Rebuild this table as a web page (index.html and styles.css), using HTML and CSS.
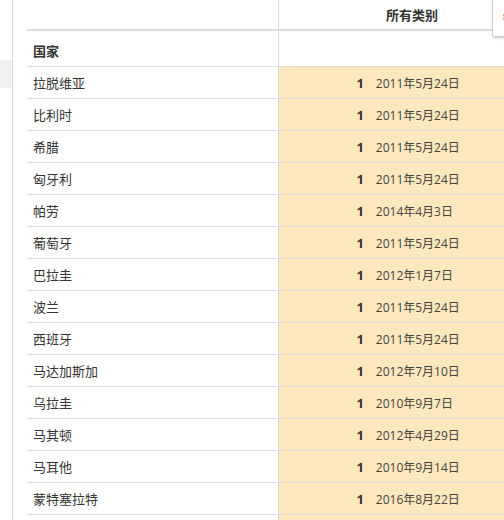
FILE: index.html
```html
<!DOCTYPE html>
<html lang="zh">
<head>
<meta charset="utf-8">
<link rel="stylesheet" href="styles.css">
</head>
<body>
<div class="page">
  <div class="rail"><div class="rail-item"></div></div>
  <div class="content">
    <table class="pivot">
      <thead>
        <tr class="head1"><th class="c1"></th><th class="c2">所有类别</th></tr>
        <tr class="head2"><th class="c1">国家</th><th class="c2"></th></tr>
      </thead>
      <tbody>
        <tr><td class="c1">拉脱维亚</td><td class="c2"><span class="num">1</span><span class="date">2011年5月24日</span></td></tr>
        <tr><td class="c1">比利时</td><td class="c2"><span class="num">1</span><span class="date">2011年5月24日</span></td></tr>
        <tr><td class="c1">希腊</td><td class="c2"><span class="num">1</span><span class="date">2011年5月24日</span></td></tr>
        <tr><td class="c1">匈牙利</td><td class="c2"><span class="num">1</span><span class="date">2011年5月24日</span></td></tr>
        <tr><td class="c1">帕劳</td><td class="c2"><span class="num">1</span><span class="date">2014年4月3日</span></td></tr>
        <tr><td class="c1">葡萄牙</td><td class="c2"><span class="num">1</span><span class="date">2011年5月24日</span></td></tr>
        <tr><td class="c1">巴拉圭</td><td class="c2"><span class="num">1</span><span class="date">2012年1月7日</span></td></tr>
        <tr><td class="c1">波兰</td><td class="c2"><span class="num">1</span><span class="date">2011年5月24日</span></td></tr>
        <tr><td class="c1">西班牙</td><td class="c2"><span class="num">1</span><span class="date">2011年5月24日</span></td></tr>
        <tr><td class="c1">马达加斯加</td><td class="c2"><span class="num">1</span><span class="date">2012年7月10日</span></td></tr>
        <tr><td class="c1">乌拉圭</td><td class="c2"><span class="num">1</span><span class="date">2010年9月7日</span></td></tr>
        <tr><td class="c1">马其顿</td><td class="c2"><span class="num">1</span><span class="date">2012年4月29日</span></td></tr>
        <tr><td class="c1">马耳他</td><td class="c2"><span class="num">1</span><span class="date">2010年9月14日</span></td></tr>
        <tr><td class="c1">蒙特塞拉特</td><td class="c2"><span class="num">1</span><span class="date">2016年8月22日</span></td></tr>
        <tr><td class="c1">&nbsp;</td><td class="c2"></td></tr>
      </tbody>
    </table>
  </div>
  <div class="popover"><span class="dots"></span></div>
</div>
</body>
</html>
```
FILE: styles.css
```css
html, body {
  margin: 0;
  padding: 0;
  background: #fff;
  overflow: hidden;
}
body {
  width: 504px;
  height: 520px;
  font-family: "Open Sans", "Noto Sans CJK SC", sans-serif;
  color: #333;
}
.page {
  position: relative;
  display: flex;
  height: 520px;
  overflow: hidden;
}
.rail {
  width: 12px;
  flex: none;
  border-right: 1px solid #dcdcdc;
  padding-top: 60px;
  box-sizing: content-box;
}
.rail-item {
  height: 28px;
  background: #f0f0f0;
}
.content {
  flex: none;
  padding-left: 14px;
}
.pivot {
  border-collapse: collapse;
  table-layout: fixed;
  width: 518px;
}
.pivot th, .pivot td {
  padding: 0 6px;
  text-align: left;
  white-space: nowrap;
}
.c1 {
  width: 233px;
  border-right: 1px solid #d8d8d8;
}
.c2 {
  width: 260px;
}
.head1 th {
  height: 29px;
  border-bottom: 2px solid #dcdcdc;
  font-size: 13px;
  font-weight: bold;
}
.head1 .c2 {
  text-align: center;
  padding-left: 0;
  padding-right: 0;
  vertical-align: middle;
}
.head2 th {
  height: 32px;
  border-bottom: 1px solid #dcdcdc;
  font-size: 13px;
  font-weight: bold;
  padding-top: 3px;
}
tbody td {
  height: 31px;
  border-bottom: 1px solid #dcdcdc;
  font-size: 13px;
}
tbody .c2 {
  background: #fde8bd;
  padding: 0;
}
.num {
  display: inline-block;
  width: 85px;
  text-align: right;
  font-weight: bold;
  font-size: 13px;
  color: #333;
}
.date {
  display: inline-block;
  margin-left: 12px;
  font-size: 12px;
  color: #444;
}
.popover {
  position: absolute;
  left: 492px;
  top: -2px;
  width: 30px;
  height: 37px;
  background: #fff;
  border: 1px solid #ccc;
  border-radius: 2px;
  box-shadow: 1px 1px 3px rgba(0,0,0,0.25);
}
.dots {
  position: absolute;
  left: 10px;
  top: 15px;
  width: 1px;
  height: 6px;
  border-left: 1px dotted #d9a860;
}
```
